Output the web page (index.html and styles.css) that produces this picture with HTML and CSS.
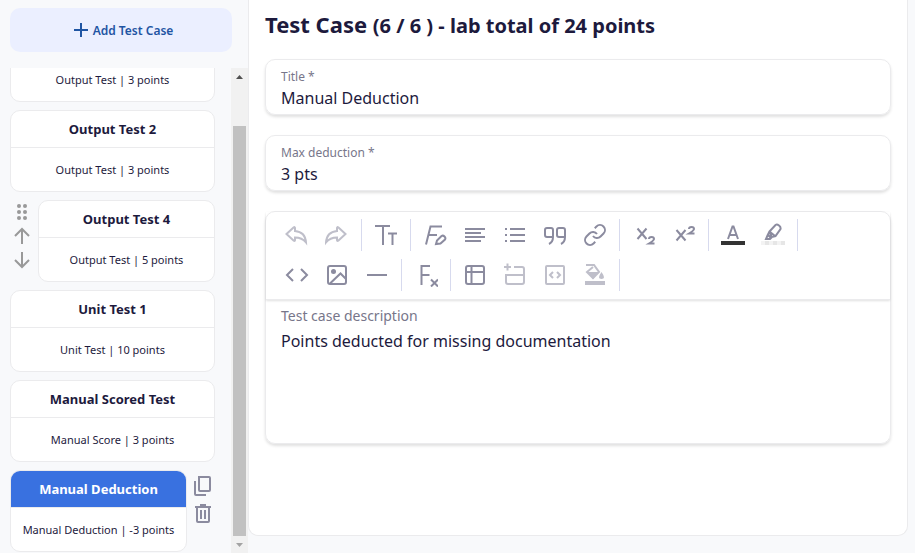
FILE: index.html
```html
<!DOCTYPE html>
<html lang="en">
	<head>
		<meta charset="utf-8" />
		<title>Test Case</title>
		<link rel="stylesheet" href="styles.css">
	</head>
	<body>
		<div class="layout">
			<div class="sidebar">
				<button class="btn-add">
					<svg width="14" height="14" viewBox="0 0 14 14"><path d="M7 0v14M0 7h14"/></svg>
					Add Test Case
				</button>
				<div class="scroller">
					<div class="list">
						<div class="item">
							<div class="card"><p>Output Test | 3 points</p></div>
						</div>
						<div class="item">
							<div class="card"><h2>Output Test 2</h2><p>Output Test | 3 points</p></div>
						</div>
						<div class="item">
							<div class="tools move">
								<button aria-label="Drag"><svg width="18" height="18" viewBox="0 0 18 18" class="dots"><circle cx="6" cy="3" r="2"/><circle cx="12" cy="3" r="2"/><circle cx="6" cy="9" r="2"/><circle cx="12" cy="9" r="2"/><circle cx="6" cy="15" r="2"/><circle cx="12" cy="15" r="2"/></svg></button>
								<button aria-label="Move up"><svg width="18" height="18" viewBox="0 0 18 18"><path d="M9 17V2M2 9l7-7 7 7"/></svg></button>
								<button aria-label="Move down"><svg width="18" height="18" viewBox="0 0 18 18"><path d="M9 1v15M2 9l7 7 7-7"/></svg></button>
							</div>
							<div class="card"><h2>Output Test 4</h2><p>Output Test | 5 points</p></div>
						</div>
						<div class="item">
							<div class="card"><h2>Unit Test 1</h2><p>Unit Test | 10 points</p></div>
						</div>
						<div class="item">
							<div class="card"><h2>Manual Scored Test</h2><p>Manual Score | 3 points</p></div>
						</div>
						<div class="item">
							<div class="card current"><h2>Manual Deduction</h2><p>Manual Deduction | -3 points</p></div>
							<div class="tools edit">
								<button aria-label="Copy"><svg width="20" height="20" viewBox="0 0 20 20"><path d="M6 1h10q1 0 1 1v12q0 1-1 1H7q-1 0-1-1V1zM2 5v13q0 1 1 1h10"/></svg></button>
								<button aria-label="Delete"><svg width="20" height="20" viewBox="0 0 20 20"><path d="M2 3h16M7 1h6M4 3v14q0 1 1 1h10q1 0 1-1V3M8 6v9M12 6v9"/></svg></button>
							</div>
						</div>
					</div>
					<div class="scrollbar">
						<svg width="17" height="17" viewBox="0 0 17 17"><path d="M5 11l3.500-4 3.500 4z" fill="#505050"/></svg>
						<div class="track"><div class="thumb"></div></div>
						<svg width="17" height="17" viewBox="0 0 17 17"><path d="M5 7l3.500 4 3.500-4z" fill="#a3a3a3"/></svg>
					</div>
				</div>
			</div>
			<div class="main">
				<h1>Test Case <small>(6 / 6 ) - lab total of 24 points</small></h1>
				<div class="field">
					<label for="title">Title *</label>
					<input id="title" type="text" value="Manual Deduction">
				</div>
				<div class="field">
					<label for="max">Max deduction *</label>
					<input id="max" type="text" value="3 pts">
				</div>
				<div class="editor">
					<div class="toolbar">
						<div class="row">
							<div class="group">
								<button disabled aria-label="Undo"><svg viewBox="0 0 24 24"><path d="M1.500 11L8.500 4.500Q10 3.500 10 5v3C16 8.500 20.500 12 21 19.500Q17 14.500 10 14.500V17Q10 18.500 8.500 17.500z"/></svg></button>
								<button disabled aria-label="Redo"><svg viewBox="0 0 24 24"><path d="M20.500 11l-7-6.500Q12 3.500 12 5v3C6 8.500 1.500 12 1 19.500Q5 14.500 12 14.500V17Q12 18.500 13.500 17.500z"/></svg></button>
							</div>
							<div class="group">
								<button aria-label="Font size"><svg viewBox="0 0 24 24"><path d="M1 3h15M9 3v19M14 10.500h9M18.500 10.500V22"/></svg></button>
							</div>
							<div class="group">
								<button aria-label="Inline style"><svg viewBox="0 0 24 24"><path d="M3 21.500L7.500 3.500H19M5.500 12H14M13 21l1-3.500 4.500-4.500q1.500-1 3 .500t.500 3L17.500 20.500z"/></svg></button>
								<button aria-label="Align"><svg viewBox="0 0 24 24"><path d="M2 6h20M2 10h16M2 14h20M2 18h16"/></svg></button>
								<button aria-label="List"><svg viewBox="0 0 24 24"><path d="M2 6h2M2 12h2M2 18h2M7 6h15M7 12h15M7 18h15"/></svg></button>
								<button aria-label="Quote"><svg viewBox="0 0 24 24"><path d="M10 14H4q-2 0-2-2V7q0-2 2-2h4q2 0 2 2v7q0 5-4 7M22 14h-6q-2 0-2-2V7q0-2 2-2h4q2 0 2 2v7q0 5-4 7"/></svg></button>
								<button aria-label="Link"><svg viewBox="0 0 24 24"><path d="M10 13a5 5 0 0 0 7.540.540l3-3a5 5 0 0 0-7.070-7.070l-1.720 1.710M14 11a5 5 0 0 0-7.540-.540l-3 3a5 5 0 0 0 7.070 7.070l1.710-1.710"/></svg></button>
							</div>
							<div class="group">
								<button aria-label="Subscript"><svg viewBox="0 0 24 24"><path d="M5.500 5.500l9 10.500M14.500 5.500l-9 10.500M17 16q0-2 2.500-2t2.500 2q0 1.500-5 4.500h5.500"/></svg></button>
								<button aria-label="Superscript"><svg viewBox="0 0 24 24"><path d="M4.500 7l9 10.500M13.500 7l-9 10.500M17 6q0-2 2.500-2t2.500 2q0 1.500-5 4.500h5.500"/></svg></button>
							</div>
							<div class="group">
								<button aria-label="Text color"><svg viewBox="0 0 24 24"><path d="M7 16l4.500-12.500h1L17 16M8.500 12h7"/><path class="fill-dark" d="M0 18h24v4H0z"/></svg></button>
								<button aria-label="Highlight"><svg viewBox="0 0 24 24"><path d="M8.500 8.500l6-6.500q1.500-1 3.500.500t1.500 3.500L14.500 13l-4 1zM8.500 8.500l5.500 4.500M8.500 8.500l-2 4L5 16l4 0 2-2M7 12l2.500 2.500"/><path class="fill-light" d="M0 18h24v4H0z"/><path class="fill-check" d="M4 18h4v4H4zM12 18h4v4h-4zM20 18h4v4h-4z"/></svg></button>
							</div>
						</div>
						<div class="row">
							<div class="group">
								<button aria-label="Code"><svg viewBox="0 0 24 24"><path d="M8 6l-6 6 6 6M16 6l6 6-6 6"/></svg></button>
								<button aria-label="Image"><svg viewBox="0 0 24 24"><rect x="3" y="3" width="18" height="18" rx="2"/><circle class="fill" cx="8.500" cy="8.500" r="2.500"/><path d="M5 20.500l10.500-10 5.500 5.500"/></svg></button>
								<button aria-label="Horizontal line"><svg viewBox="0 0 24 24"><path d="M2 12h20"/></svg></button>
							</div>
							<div class="group">
								<button aria-label="Clear formatting"><svg viewBox="0 0 24 24"><path d="M7.500 22V3h8.500M7.500 12h8M17 16.500l7 7M24 16.500l-7 7"/></svg></button>
							</div>
							<div class="group">
								<button aria-label="Table"><svg viewBox="0 0 24 24"><rect x="3" y="3" width="18" height="18" rx="2"/><path d="M3 9h18M8.500 3v18"/></svg></button>
								<button disabled aria-label="Row"><svg viewBox="0 0 24 24"><path d="M4.500.500v7M1 4h7M11 4h8q2 0 2 2v13q0 2-2 2H5q-2 0-2-2v-8M3 12h18"/></svg></button>
								<button disabled aria-label="Cell"><svg viewBox="0 0 24 24"><rect x="3" y="3" width="18" height="18" rx="1"/><path d="M10 9l-3 3 3 3M14 9l3 3-3 3"/></svg></button>
								<button disabled aria-label="Cell color"><svg viewBox="0 0 24 24"><path d="M3 2h8l5 7-6 6-6-6 6-5"/><path class="fill" d="M4 9h12l-6 7zM18.500 9q5 7 0 7t0-7zM2 18h20v4H2z"/></svg></button>
							</div>
						</div>
					</div>
					<div class="area">
						<label for="desc">Test case description</label>
						<textarea id="desc" spellcheck="false">Points deducted for missing documentation</textarea>
					</div>
				</div>
			</div>
		</div>
	</body>
</html>
```
FILE: styles.css
```css
*{
	margin: 0;
	padding: 0;
	box-sizing: border-box;
	font-family: "Noto Sans", "Open Sans", sans-serif;
}
body{
	background-color: #f8f9fb;
	color: #1d1a3d;
}
button{
	border: 0;
	background: none;
	cursor: pointer;
}
svg{
	display: block;
	fill: none;
	stroke: #8b8b9f;
	stroke-width: 2;
}
.layout{
	display: flex;
	height: 100vh;
}
/*sidebar*/
.sidebar{
	display: flex;
	flex-direction: column;
	flex: none;
	width: 248px;
	padding-top: 8px;
}
.btn-add{
	display: flex;
	align-items: center;
	justify-content: center;
	gap: 5px;
	flex: none;
	height: 44px;
	margin: 0 16px 16px 10px;
	padding-left: 5px;
	border-radius: 10px;
	background-color: #ebefff;
	color: #1f55a3;
	font-size: 12px;
	font-weight: 600;
}
.btn-add svg{
	stroke: #1f55a3;
}
.scroller{
	display: flex;
	flex: 1;
	min-height: 0;
}
.list{
	display: flex;
	flex-direction: column;
	justify-content: flex-end;
	gap: 8px;
	flex: 1;
	padding: 0 16px 1px 10px;
	overflow: hidden;
}
.item{
	display: flex;
	flex: none;
}
.card{
	flex: 1;
	border: 1px solid #ebebed;
	border-radius: 10px;
	background-color: #fff;
	text-align: center;
	overflow: hidden;
}
.card h2{
	border-bottom: 1px solid #ebebed;
	font-size: 13px;
	font-weight: 700;
	line-height: 36px;
}
.card p{
	font-size: 11px;
	line-height: 43px;
	white-space: nowrap;
}
.card.current h2{
	background-color: #3971e0;
	color: #fff;
}
.tools{
	display: flex;
	flex-direction: column;
	flex: none;
	width: 28px;
}
.tools.move{
	gap: 6px;
	padding: 3px 0 0 3px;
}
.tools.move svg{
	stroke: #999;
}
.tools.move .dots{
	fill: #999;
	stroke: none;
}
.tools.edit{
	gap: 8px;
	padding: 6px 0 0 6px;
}
.scrollbar{
	display: flex;
	flex-direction: column;
	flex: none;
	width: 17px;
	background-color: #f1f1f1;
}
.scrollbar svg{
	stroke: none;
}
.track{
	display: flex;
	flex-direction: column;
	justify-content: flex-end;
	flex: 1;
	padding: 0 2px;
}
.thumb{
	height: 91%;
	background-color: #c1c1c1;
}
/*main*/
.main{
	flex: 1;
	min-width: 0;
	margin: 0 7px 17px 0;
	padding: 8px 16px;
	border: 1px solid #ebebed;
	border-top: 0;
	border-radius: 0 0 10px 10px;
	background-color: #fff;
}
h1{
	height: 32px;
	margin-bottom: 19px;
	font-size: 22px;
	line-height: 32px;
}
h1 small{
	font-size: 20px;
}
.field, .editor{
	border: 1px solid #ebebed;
	border-radius: 10px;
	box-shadow: 0 2px 3px 0 rgba(0, 0, 0, .12);
}
.field{
	height: 56px;
	margin-bottom: 20px;
	padding: 8px 15px;
}
label{
	display: block;
	color: #77768a;
}
.field label{
	font-size: 12px;
	line-height: 18px;
}
input, textarea{
	display: block;
	width: 100%;
	border: 0;
	outline: 0;
	background: none;
	color: inherit;
	font-size: 16px;
	line-height: 24px;
}
input{
	height: 24px;
}
/*editor*/
.toolbar{
	padding: 3px 11px 4px;
	border-bottom: 1px solid #ebebed;
	box-shadow: 0 1px 2px 0 rgba(0, 0, 0, .12);
}
.row{
	display: flex;
	height: 40px;
}
.group{
	display: flex;
	align-items: center;
}
.group:after{
	width: 1px;
	height: 32px;
	margin: 0 4px;
	background-color: #d7daee;
	content: "";
}
.group button{
	width: 40px;
	height: 40px;
	padding: 8px;
}
.group button:disabled{
	opacity: .55;
}
.group svg{
	width: 24px;
	height: 24px;
}
.group svg .fill{
	fill: #8b8b9f;
	stroke: none;
}
.group svg .fill-dark{
	fill: #333;
	stroke: none;
}
.group svg .fill-light{
	fill: #f3f3f3;
	stroke: none;
}
.group svg .fill-check{
	fill: #e6e6e6;
	stroke: none;
}
.area{
	padding: 4px 15px 6px;
}
.area label{
	margin-bottom: 1px;
	font-size: 14px;
	line-height: 24px;
}
textarea{
	height: 108px;
	resize: none;
}
```
